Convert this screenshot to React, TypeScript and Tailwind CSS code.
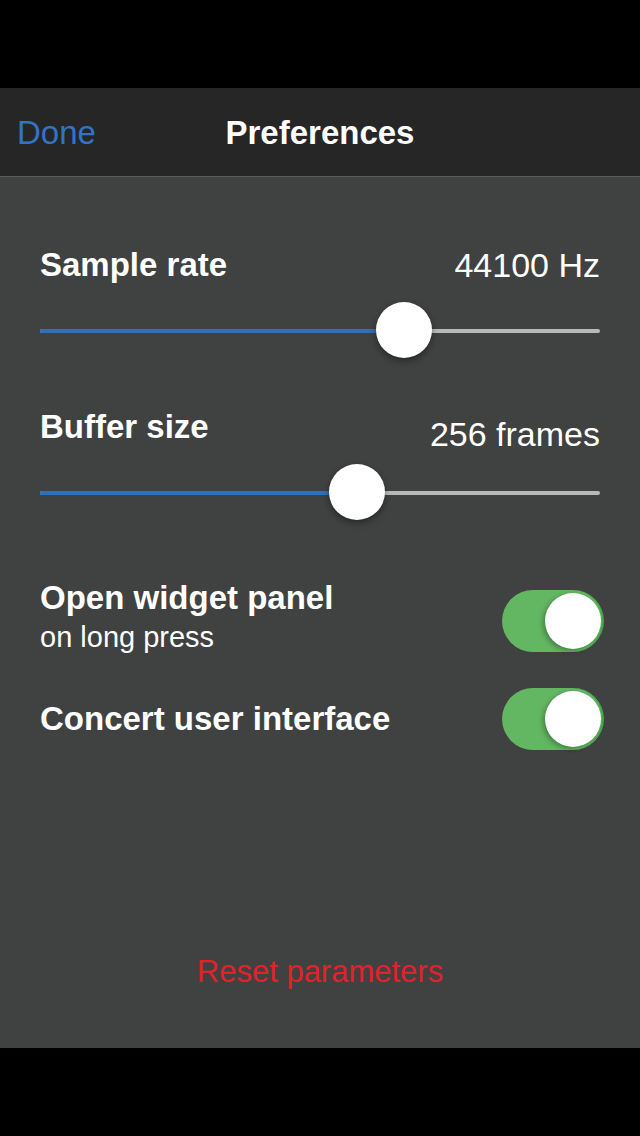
import { FC, ReactNode } from 'react'

const font = { fontFamily: '"Liberation Sans", Arial, sans-serif' }

interface SliderProps {
  fillClass: string
  thumbClass: string
}

const Slider: FC<SliderProps> = ({ fillClass, thumbClass }) => {
  return (
    <div className="relative h-[56px] w-[560px]">
      {/* track */}
      <div className="absolute left-0 right-0 top-[27px] flex h-[4px] rounded-full bg-[#b9b9b9]">
        <div className={`h-full rounded-l-full bg-[#2f6fbb] ${fillClass}`} />
      </div>
      {/* thumb */}
      <div
        className={`absolute top-0 h-[56px] w-[56px] rounded-full bg-white shadow-[0_3px_7px_rgba(0,0,0,0.4)] ${thumbClass}`}
      />
    </div>
  )
}

const Toggle: FC = () => (
  <div className="flex h-[62px] w-[102px] items-center justify-end rounded-full border-r-2 border-[#48a84a] bg-[#63b662] pr-[1px]">
    <div className="h-[56px] w-[56px] rounded-full bg-white shadow-[-2px_2px_5px_rgba(0,0,0,0.3)]" />
  </div>
)

const Row: FC<{ children: ReactNode; className?: string }> = ({ children, className }) => (
  <div className={`flex justify-between ${className ?? ''}`}>{children}</div>
)

export default function App() {
  return (
    <div className="flex h-[1136px] w-[640px] flex-col bg-black text-white" style={font}>
      <div className="h-[88px] shrink-0 bg-black" />

      {/* nav bar */}
      <div className="relative flex h-[89px] shrink-0 items-center border-b border-[#5a5b5b] bg-[#262626]">
        <button className="pl-[17px] text-[33px] leading-none text-[#3274c3]">Done</button>
        <div className="absolute left-0 right-0 text-center text-[33px] font-bold leading-none">
          Preferences
        </div>
      </div>

      {/* content */}
      <div className="flex flex-1 flex-col bg-[#404141] pl-[40px] pr-[36px]">
        <Row className="mt-[68px] h-[40px] items-center pr-[4px]">
          <span className="text-[33px] font-bold">Sample rate</span>
          <span className="text-[34px]">44100 Hz</span>
        </Row>
        <div className="mt-[17px]">
          <Slider fillClass="w-[364px]" thumbClass="left-[336px]" />
        </div>

        <Row className="mt-[49px] h-[40px] items-start pr-[4px]">
          <span className="text-[33px] font-bold leading-[40px]">Buffer size</span>
          <span className="mt-[7px] text-[34px] leading-[40px]">256 frames</span>
        </Row>
        <div className="mt-[17px]">
          <Slider fillClass="w-[317px]" thumbClass="left-[289px]" />
        </div>

        <Row className="mt-[58px] items-start">
          <div className="flex flex-col">
            <span className="text-[33px] font-bold leading-[40px]">Open widget panel</span>
            <span className="mt-[1px] text-[29px] leading-[36px]">on long press</span>
          </div>
          <div className="mt-[12px]">
            <Toggle />
          </div>
        </Row>

        <Row className="mt-[33px] h-[62px] items-center">
          <span className="text-[33px] font-bold leading-[40px]">Concert user interface</span>
          <Toggle />
        </Row>

        <div className="mt-auto mb-[56px] pr-[4px] text-center text-[31px] leading-[40px] text-[#e3212a]">
          Reset parameters
        </div>
      </div>

      <div className="h-[88px] shrink-0 bg-black" />
    </div>
  )
}
